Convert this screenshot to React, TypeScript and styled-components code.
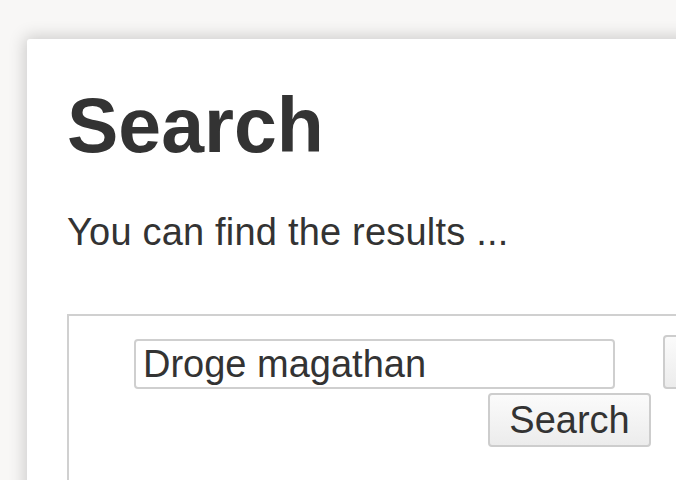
import React from "react";
import styled, { createGlobalStyle } from "styled-components";

const Global = createGlobalStyle`
  html, body { margin: 0; padding: 0; background: #f8f7f6; overflow: hidden; }
  body { font-family: "Liberation Sans", Arial, sans-serif; color: #333; }
`;

const Page = styled.div`
  width: 676px;
  height: 480px;
  padding: 39px 0 0 27px;
  box-sizing: border-box;
  overflow: hidden;
`;

const Card = styled.div`
  background: #fff;
  width: 900px;
  height: 600px;
  box-sizing: border-box;
  padding: 43px 0 0 40px;
  border-radius: 3px 0 0 0;
  box-shadow: 0 0 16px 3px rgba(0, 0, 0, 0.17);
`;

const Title = styled.h1`
  margin: 0;
  font-size: 77px;
  font-weight: 700;
  line-height: 87px;
  color: #333;
`;

const Lead = styled.p`
  margin: 41px 0 0;
  font-size: 38px;
  line-height: 44px;
  color: #333;
  letter-spacing: 0.2px;
`;

const Panel = styled.div`
  margin-top: 60px;
  border: 2px solid #d0d0d0;
  border-right: none;
  border-bottom: none;
  display: flex;
  align-items: flex-start;
  gap: 12px;
  padding: 19px 0 0 65px;
  height: 300px;
`;

const FormCol = styled.form`
  display: flex;
  flex-direction: column;
  flex-shrink: 0;
  width: 517px;
  margin-top: 4px;
`;

const TextInput = styled.input`
  width: 481px;
  height: 50px;
  box-sizing: border-box;
  border: 2px solid #cfcfcf;
  border-radius: 4px;
  padding: 0 7px;
  font-family: "Liberation Sans", Arial, sans-serif;
  font-size: 38px;
  color: #333;
  background: #fff;
  outline: none;
`;

const Button = styled.button<{ $w?: number }>`
  width: ${(p) => (p.$w ? `${p.$w}px` : "auto")};
  height: 54px;
  box-sizing: border-box;
  border: 2px solid #cdcdcd;
  border-radius: 4px;
  background: linear-gradient(#fbfbfb, #ececec);
  font-family: "Liberation Sans", Arial, sans-serif;
  font-size: 38px;
  color: #333;
  padding: 0 19px;
  flex-shrink: 0;
`;

const SubmitButton = styled(Button)`
  align-self: flex-end;
  margin-top: 4px;
`;

export default function App() {
  return (
    <Page>
      <Global />
      <Card>
        <Title>Search</Title>
        <Lead>You can find the results ...</Lead>
        <Panel>
          <FormCol onSubmit={(e) => e.preventDefault()}>
            <TextInput defaultValue="Droge magathan" />
            <SubmitButton $w={163}>Search</SubmitButton>
          </FormCol>
          <Button $w={170}>Reset</Button>
        </Panel>
      </Card>
    </Page>
  );
}
